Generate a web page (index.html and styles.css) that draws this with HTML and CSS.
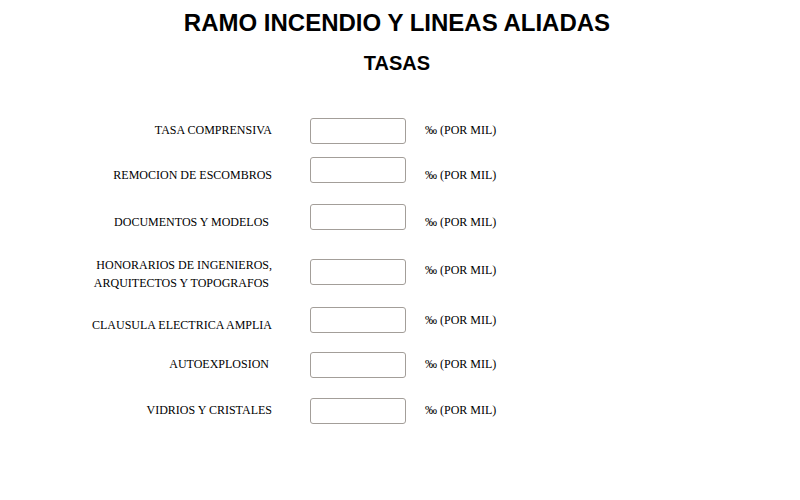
FILE: index.html
```html
<!DOCTYPE html>
<html lang="es">
<head>
<meta charset="utf-8">
<title>Tasas</title>
<link rel="stylesheet" href="styles.css">
</head>
<body>
<div class="page">
  <h1 class="title">RAMO INCENDIO Y LINEAS ALIADAS</h1>
  <h2 class="subtitle">TASAS</h2>
  <form class="rates">
    <div class="row r1"><label class="lbl up">TASA COMPRENSIVA</label><input class="field" type="text"><span class="unit up">‰ (POR MIL)</span></div>
    <div class="row r2"><label class="lbl down">REMOCION DE ESCOMBROS</label><input class="field" type="text"><span class="unit down">‰ (POR MIL)</span></div>
    <div class="row r3"><label class="lbl down">DOCUMENTOS Y MODELOS&nbsp;</label><input class="field" type="text"><span class="unit down">‰ (POR MIL)</span></div>
    <div class="row r4"><label class="lbl down2">HONORARIOS DE INGENIEROS,<br>ARQUITECTOS Y TOPOGRAFOS&nbsp;</label><input class="field" type="text"><span class="unit up2">‰ (POR MIL)</span></div>
    <div class="row r5"><label class="lbl down">CLAUSULA ELECTRICA AMPLIA</label><input class="field" type="text"><span class="unit">‰ (POR MIL)</span></div>
    <div class="row r6"><label class="lbl up">AUTOEXPLOSION&nbsp;</label><input class="field" type="text"><span class="unit up">‰ (POR MIL)</span></div>
    <div class="row r7"><label class="lbl up">VIDRIOS Y CRISTALES</label><input class="field" type="text"><span class="unit up">‰ (POR MIL)</span></div>
  </form>
</div>
</body>
</html>
```
FILE: styles.css
```css
html, body {
  margin: 0;
  padding: 0;
  background: #ffffff;
}
body {
  padding: 9px 14px 0 8px;
  color: #000;
  font-family: "Liberation Serif", "Times New Roman", serif;
}
.title {
  margin: 0;
  text-align: center;
  font-family: "Liberation Sans", Arial, sans-serif;
  font-weight: bold;
  font-size: 24px;
  line-height: 28px;
}
.subtitle {
  margin: 15px 0 0 0;
  text-align: center;
  font-family: "Liberation Sans", Arial, sans-serif;
  font-weight: bold;
  font-size: 20px;
  line-height: 23px;
}
.rates {
  margin: 37px 0 0 0;
  padding-left: 72px;
}
.row {
  display: flex;
  align-items: center;
}
.r1 { height: 38px; }
.r2 { height: 40px; }
.r3 { height: 54px; }
.r4 { height: 56px; }
.r5 { height: 40px; }
.r6 { height: 50px; }
.r7 { height: 42px; }
.lbl {
  width: 192px;
  text-align: right;
  font-size: 12px;
  line-height: 18px;
}
.field {
  box-sizing: border-box;
  width: 96px;
  height: 26px;
  margin: 0 19px 0 38px;
  border: 1px solid #a39e99;
  border-radius: 3px;
  background: #fff;
  padding: 0;
}
.unit {
  font-size: 12px;
  line-height: 18px;
  white-space: nowrap;
}
.up { margin-bottom: 2px; }
.up2 { margin-bottom: 4px; }
.down { margin-top: 10px; }
.down2 { margin-top: 4px; }
```
